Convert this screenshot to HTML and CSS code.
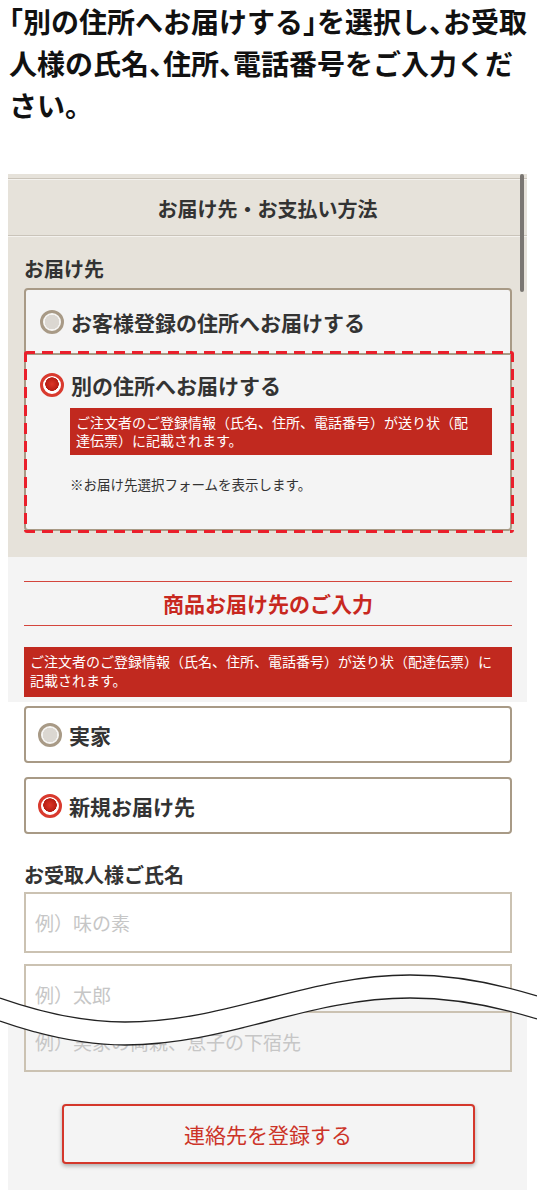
FILE: index.html
```html
<!DOCTYPE html>
<html lang="ja">
<head>
    <meta charset="UTF-8">
    <meta name="viewport" content="width=device-width, initial-scale=1.0">
    <title>お届け先の入力</title>
    <link rel="stylesheet" href="styles.css">
</head>
<body>
    <p class="lead">「別の住所へお届けする」を選択し、お受取<br>人様の氏名、住所、電話番号をご入力くだ<br>さい。</p>

    <div class="shot">
        <div class="sheet">
            <span class="scrollbar"></span>
            <h2 class="sheet-head">お届け先・お支払い方法</h2>
            <div class="sheet-body">
                <h3 class="field-label">お届け先</h3>
                <div class="choice-box">
                    <div class="choice">
                        <span class="radio"></span>
                        <span class="choice-text">お客様登録の住所へお届けする</span>
                    </div>
                    <div class="choice-other">
                        <div class="choice-row">
                            <span class="radio on"></span>
                            <span class="choice-text">別の住所へお届けする</span>
                        </div>
                        <p class="notice notice-inset">ご注文者のご登録情報（氏名、住所、電話番号）が送り状（配達伝票）に記載されます。</p>
                        <p class="note">※お届け先選択フォームを表示します。</p>
                    </div>
                </div>
            </div>
        </div>
        <div class="entry-top">
            <h2 class="entry-head">商品お届け先のご入力</h2>
            <p class="notice notice-wide">ご注文者のご登録情報（氏名、住所、電話番号）が送り状（配達伝票）に記載されます。</p>
        </div>
    </div>

    <div class="entry-mid">
        <label class="addr-option"><span class="radio"></span>実家</label>
        <label class="addr-option"><span class="radio on"></span>新規お届け先</label>
        <h3 class="field-label name-label">お受取人様ご氏名</h3>
        <input class="text-input" type="text" placeholder="例）味の素">
        <input class="text-input gap" type="text" placeholder="例）太郎">

        <!-- torn edge between the two halves of the form -->
        <svg class="wave" width="537" height="90" viewBox="0 0 537 90">
            <path d="M0,38 C40,52 85,62 125,62 C228,62 307,15 410,15 C460,15 505,26 537,36 L537,59 C505,49 460,38 410,38 C307,38 228,85 125,85 C85,85 40,75 0,61 Z" fill="#fff"/>
            <path d="M0,38 C40,52 85,62 125,62 C228,62 307,15 410,15 C460,15 505,26 537,36" fill="none" stroke="#222" stroke-width="1.3"/>
            <path d="M0,61 C40,75 85,85 125,85 C228,85 307,38 410,38 C460,38 505,49 537,59" fill="none" stroke="#222" stroke-width="1.3"/>
        </svg>
    </div>

    <div class="entry-bottom">
        <div class="tail">
            <input class="text-input muted" type="text" placeholder="例）実家の両親、息子の下宿先">
            <button class="submit" type="button">連絡先を登録する</button>
        </div>
    </div>
</body>
</html>
```

FILE: styles.css
```css
body {
    margin: 0;
    padding: 0;
    background-color: #fff;
    color: #333;
    font-family: "Noto Sans CJK JP", "Noto Sans", sans-serif;
}
.lead {
    margin: 0;
    padding-left: 9px;
    font-size: 28px;
    line-height: 42px;
    font-weight: 700;
    color: #111;
    white-space: nowrap;
    font-feature-settings: "halt";
}

/* upper capture: beige sheet + grey entry header */
.shot {
    margin: 48px 10px 0 8px;
}
.sheet {
    position: relative;
    background-color: #e6e2da;
    padding: 4px 0 26px;
}
.scrollbar {
    position: absolute;
    top: 0;
    right: 3px;
    width: 4px;
    height: 118px;
    border-radius: 2px;
    background-color: #7a7672;
}
.sheet-head {
    margin: 0;
    height: 52px;
    padding-top: 4px;
    line-height: 52px;
    border-top: 1px solid #cac4ba;
    border-bottom: 1px solid #cac4ba;
    box-shadow: inset 0 1px 0 #f4f2ee, 0 1px 0 #f4f2ee;
    text-align: center;
    font-size: 20px;
    font-weight: 700;
}
.sheet-body {
    padding: 0 15px 0 16px;
}
.field-label {
    margin: 19px 0 5px;
    font-size: 20px;
    line-height: 28px;
    font-weight: 700;
}
.choice-box {
    border: 2px solid #a89a86;
    border-radius: 4px;
    background-color: #f4f4f4;
}
.choice {
    display: flex;
    align-items: center;
    height: 63px;
    padding-left: 14px;
    border-bottom: 2px solid #a89a86;
}
.choice-text {
    font-size: 21px;
    font-weight: 700;
    line-height: 24px;
}
.choice-other {
    position: relative;
    padding: 18px 18px 36px 14px;
}
/* red dashed frame drawn over the selected option */
.choice-other::after {
    content: "";
    position: absolute;
    top: -4px;
    left: -2px;
    right: -4px;
    bottom: -4px;
    background:
        repeating-linear-gradient(90deg, #ea1f2b 0 11px, transparent 11px 18px) top left / 100% 3px no-repeat,
        repeating-linear-gradient(90deg, #ea1f2b 0 11px, transparent 11px 18px) bottom left / 100% 3px no-repeat,
        repeating-linear-gradient(180deg, #ea1f2b 0 11px, transparent 11px 18px) top left / 3px 100% no-repeat,
        repeating-linear-gradient(180deg, #ea1f2b 0 11px, transparent 11px 18px) top right / 3px 100% no-repeat;
    border-radius: 3px;
    pointer-events: none;
}
.choice-row {
    display: flex;
    align-items: center;
    height: 24px;
}
.radio {
    flex: none;
    width: 24px;
    height: 24px;
    box-sizing: border-box;
    margin-right: 7px;
    border-radius: 50%;
    border: 3px solid #a89a86;
    background: radial-gradient(circle, #dbd7d1 0 7px, #f6f5f3 7.5px);
}
.radio.on {
    border-color: #d93a2e;
    background: radial-gradient(circle at 50% 45%, #dc3628 0, #b71d13 6.5px, #fff 7px);
}
.notice {
    margin: 0;
    background-color: #c1291f;
    color: #fff;
    font-size: 14px;
    line-height: 18px;
}
.notice-inset {
    margin: 11px 0 0 30px;
    padding: 5px 16px 6px 6px;
}
.note {
    margin: 20px 0 0 30px;
    font-size: 13.5px;
    line-height: 18px;
}

.entry-top {
    background-color: #f4f4f4;
    padding: 24px 15px 5px 16px;
}
.entry-head {
    margin: 0;
    height: 43px;
    line-height: 43px;
    border-top: 1px solid #d4453c;
    border-bottom: 1px solid #d4453c;
    text-align: center;
    font-size: 21px;
    font-weight: 700;
    color: #c8281f;
}
.notice-wide {
    margin-top: 21px;
    padding: 5px 8px 7px 6px;
    line-height: 19px;
}

/* white middle part */
.entry-mid {
    position: relative;
    padding: 4px 25px 0 24px;
}
.addr-option {
    display: flex;
    align-items: center;
    height: 53px;
    padding-left: 12px;
    border: 2px solid #a89a86;
    border-radius: 4px;
    background-color: #fff;
    font-size: 21px;
    font-weight: 700;
}
.addr-option + .addr-option {
    margin-top: 14px;
}
.name-label {
    margin: 27px 0 3px;
}
.text-input {
    display: block;
    width: 100%;
    height: 61px;
    box-sizing: border-box;
    margin: 0;
    padding: 0 9px;
    border: 2px solid #cbc2b2;
    border-radius: 0;
    background-color: #fff;
    font-family: "Noto Sans CJK JP", sans-serif;
    font-size: 19px;
    color: #333;
}
.text-input::placeholder {
    color: #c6c6c6;
}
.text-input.gap {
    margin-top: 11px;
}
.text-input.muted {
    background-color: #f4f4f4;
}
.wave {
    position: absolute;
    top: 258px;
    left: 0;
    z-index: 2;
    display: block;
}

/* lower capture, cut along the wave */
.entry-bottom {
    margin-top: -30px;
    clip-path: path("M0,26 C40,40 85,50 125,50 C228,50 307,3 410,3 C460,3 505,14 537,24 L537,400 L0,400 Z");
}
.tail {
    margin: 0 10px 0 8px;
    padding: 16px 15px 26px 16px;
    background-color: #f4f4f4;
}
.submit {
    display: block;
    width: 413px;
    height: 60px;
    margin: 32px auto 0;
    border: 2px solid #d4372b;
    border-radius: 4px;
    background-color: #f4f4f4;
    box-shadow: 0 2px 4px rgba(0, 0, 0, 0.3);
    color: #cc3328;
    font-family: "Noto Sans CJK JP", sans-serif;
    font-size: 21px;
}
```
